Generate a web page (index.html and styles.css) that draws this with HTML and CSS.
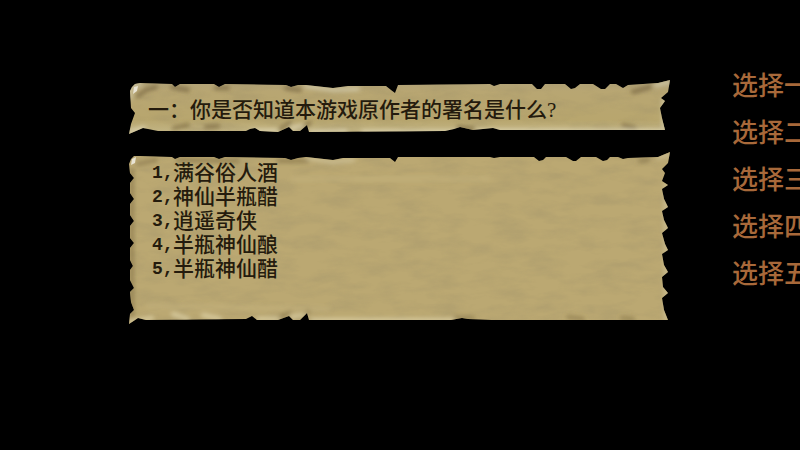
FILE: index.html
```
<!doctype html>
<html lang="zh-CN">
<head>
  <title>问答</title>
  <meta charset="utf-8">
  <link rel="stylesheet" href="styles.css">
</head>
<body>

<main class="quiz">
  <div class="papers">
    <section class="paper question">
      <svg class="scroll" viewBox="0 0 544 56" preserveAspectRatio="none" aria-hidden="true">
        <defs>
          <linearGradient id="shade" x1="0" y1="0" x2="0" y2="1">
            <stop offset="0" stop-color="#b0a27a"/>
            <stop offset=".25" stop-color="#b8a672"/>
            <stop offset=".75" stop-color="#b8a66e"/>
            <stop offset="1" stop-color="#c4b788"/>
          </linearGradient>
          <filter id="grain" x="0" y="0" width="100%" height="100%">
            <feTurbulence type="fractalNoise" baseFrequency=".03 .09" numOctaves="4" seed="4"/>
            <feColorMatrix values="0 0 0 0 .38  0 0 0 0 .31  0 0 0 0 .15  2 0 0 0 -.8"/>
          </filter>
          <filter id="soft" x="-20%" y="-50%" width="140%" height="200%">
            <feGaussianBlur stdDeviation="2"/>
          </filter>
          <clipPath id="strip">
            <path d="M4 9 7 6 12 5 44 6 47 9 52 6 86 6 91 9 97 6 158 7 163 9 170 7 178 7 205 10 220 8 258 8 263 12 267 15 270 7 362 6 366 8 372 6 404 6 409 11 413 11 417 6 437 6 443 11 447 10 452 6 465 6 473 11 477 11 482 6 488 6 495 10 500 7 530 5 542 2 540 14 533 20 537 23 532 30 534 40 537 52 372 52 365 50 345 52 332 49 326 51 317 53 181 54 179 47 172 53 165 53 161 49 150 54 132 53 127 50 122 51 118 53 30 53 15 50 8 53 1 56 3 46 7 35 3 30 2 13Z"/>
          </clipPath>
        </defs>
        <g clip-path="url(#strip)">
          <rect width="544" height="56" fill="url(#shade)"/>
          <rect width="544" height="56" filter="url(#grain)" opacity=".5"/>
          <g filter="url(#soft)" fill="none" stroke-width="4" stroke-linecap="round">
            <path d="M10 18 18 12 28 9M44 9 60 12M88 10 100 10M158 10 172 12M505 14 522 9" stroke="#786641" opacity=".8"/>
            <path d="M46 50 60 47M78 49 90 48M152 51 162 45M170 51 182 45M330 49 345 51M495 47 507 50" stroke="#78653c" opacity=".7"/>
            <path d="M2 20 3 8 12 6M178 8 206 12 230 11M528 7 542 4M536 22 536 51" stroke="#d5cdae" opacity=".8"/>
            <path d="M2 54 16 50M125 53 148 53M164 50 174 48M184 54 218 53M235 54 330 54M350 53 534 53" stroke="#e0d7b5" opacity=".8"/>
          </g>
          <path d="M5 16 6 9 10 8 9 13Z" fill="#e9e4d4"/>
        </g>
      </svg>
      <h1 class="title">一：你是否知道本游戏原作者的署名是什么?</h1>
    </section>

    <section class="paper answers">
      <svg class="scroll" viewBox="0 0 544 176" preserveAspectRatio="none" aria-hidden="true">
        <defs>
          <clipPath id="sheet">
            <path d="M3 9 6 6 12 6 44 7 47 9 52 7 86 7 91 9 97 7 157 8 163 10 170 8 178 7 205 10 215 8 262 8 267 12 270 7 362 7 366 8 372 7 406 7 411 11 415 10 418 7 438 7 445 11 448 11 453 7 468 7 475 11 479 10 482 7 490 7 495 9 500 8 530 7 542 2 540 13 534 19 537 23 534 31 540 35 534 39 536 49 540 57 534 61 536 70 540 78 534 83 537 94 540 100 534 104 536 115 540 122 534 127 535 137 540 143 534 148 536 160 540 170 364 170 340 169 334 168 323 170 181 170 179 163 172 170 165 170 161 166 150 170 129 170 124 166 118 169 18 170 10 168 1 174 2 164 6 160 3 152 2 142 6 138 2 130 2 120 5 116 2 110 2 98 6 93 2 88 2 76 6 71 2 65 2 54 6 49 2 43 2 33 6 28 2 23 1 14Z"/>
          </clipPath>
        </defs>
        <g clip-path="url(#sheet)">
          <rect width="544" height="176" fill="#bba872"/>
          <rect width="544" height="176" filter="url(#grain)" opacity=".5"/>
          <g filter="url(#soft)" fill="none" stroke-width="4" stroke-linecap="round">
            <path d="M4 20V166M10 14 28 10M50 10 110 11M150 11 180 11M512 11 520 10" stroke="#85744a" opacity=".7"/>
            <path d="M150 168 162 162M170 168 181 161M326 168 345 168M440 167 455 169M494 168 505 169" stroke="#827044" opacity=".6"/>
            <path d="M180 8 205 12 225 10M530 7 541 5M538 34V170" stroke="#d0c398" opacity=".8"/>
            <path d="M2 172 24 168M45 164 60 169M75 165 92 169M130 169 150 169M164 167 176 165M184 170 325 170" stroke="#e0d4aa" opacity=".8"/>
            <path d="M165 29 360 29M20 156 200 159" stroke="#c7b681" opacity=".5"/>
          </g>
          <path d="M3 15 4 9 8 7 7 13Z" fill="#e9e4d4"/>
        </g>
      </svg>
      <ol class="options">
        <li><span class="number">1,</span>满谷俗人酒</li>
        <li><span class="number">2,</span>神仙半瓶醋</li>
        <li><span class="number">3,</span>逍遥奇侠</li>
        <li><span class="number">4,</span>半瓶神仙酿</li>
        <li><span class="number">5,</span>半瓶神仙醋</li>
      </ol>
    </section>
  </div>

  <nav class="choices">
    <button type="button" class="choice">选择一</button>
    <button type="button" class="choice">选择二</button>
    <button type="button" class="choice">选择三</button>
    <button type="button" class="choice">选择四</button>
    <button type="button" class="choice">选择五</button>
  </nav>
</main>

</body>
</html>
```
FILE: styles.css
```
html {
  height: 100%;
}

body {
  margin: 0;
  min-height: 100%;
  background: #000;
  color: #241b0d;
  font-family: "Liberation Serif", "Noto Sans CJK SC", serif;
  font-size: 21px;
  line-height: 24px;
}

/* the choices run off the right edge on narrow windows */
.quiz {
  display: flex;
  align-items: flex-start;
  gap: 60px;
  padding-left: 16%;
  overflow: hidden;
}

.papers {
  display: flex;
  flex-direction: column;
  flex: none;
  gap: 16px;
  width: 68vw;
  padding-top: 78px;
}

.paper {
  position: relative;
}

.scroll {
  position: absolute;
  top: 0;
  left: 0;
  width: 100%;
  height: 100%;
}

.title {
  position: relative;
  margin: 0;
  padding: 20px 0 12px 20px;
  font-size: 21px;
  font-weight: 500;
  line-height: 24px;
}

.options {
  position: relative;
  margin: 0;
  padding: 11px 24px 45px;
  list-style: none;
  font-weight: 500;
}

.options li {
  display: flex;
}

.number {
  width: 21px;
  font-family: "Liberation Mono", monospace;
  font-size: 18px;
  font-weight: 700;
}

.choices {
  display: flex;
  flex-direction: column;
  flex: none;
  gap: 23px;
  padding-top: 72px;
}

.choice {
  padding: 0;
  border: 0;
  background: none;
  color: #a8693a;
  font-family: "Noto Sans CJK SC", sans-serif;
  font-size: 26px;
  font-weight: 500;
  line-height: 24px;
  text-align: left;
  white-space: nowrap;
  cursor: pointer;
}

.choice:hover {
  color: #e09a5c;
}
```
